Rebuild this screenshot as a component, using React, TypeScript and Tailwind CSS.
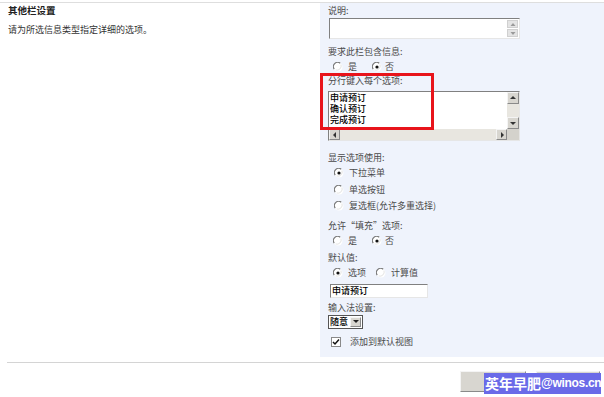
import React from "react";

const Radio = ({ checked }: { checked?: boolean }) => (
  <svg width="10" height="10" viewBox="0 0 10 10" className="shrink-0">
    <circle cx="5" cy="5" r="4.5" fill="#ffffff" />
    <path d="M1.2 7.2 A4.3 4.3 0 0 1 7.2 1.2" stroke="#7a7a7a" strokeWidth="1.2" fill="none" />
    <path d="M8 2.6 A4.3 4.3 0 0 1 2.6 8" stroke="#e4e4e4" strokeWidth="1" fill="none" />
    {checked && <circle cx="5" cy="5" r="1.6" fill="#111111" />}
  </svg>
);

const Label = ({ children, mt }: { children: React.ReactNode; mt: string }) => (
  <div className={`${mt} h-[11px] leading-[11px] text-[9px] text-[#4a4a4a] whitespace-nowrap`}>{children}</div>
);

const Sunken = "border border-t-[#808080] border-l-[#808080] border-b-[#e6e6e6] border-r-[#e6e6e6]";

const Arrow = ({ dir }: { dir: "up" | "down" | "left" | "right" }) => {
  const d =
    dir === "up" ? "M1 5 L4 2 L7 5 Z" : dir === "down" ? "M1 3 L4 6 L7 3 Z" : dir === "left" ? "M5 1 L2 4 L5 7 Z" : "M3 1 L6 4 L3 7 Z";
  return (
    <svg width="8" height="8" viewBox="0 0 8 8">
      <path d={d} fill="#333" />
    </svg>
  );
};

const SmallArrow = ({ dir }: { dir: "up" | "down" }) => (
  <svg width="6" height="5" viewBox="0 0 6 5">
    <path d={dir === "up" ? "M0.5 4 L3 1 L5.5 4 Z" : "M0.5 1 L3 4 L5.5 1 Z"} fill="#9a9a9a" />
  </svg>
);

const Btn3d = "bg-[#d8d6d0] border border-t-[#f4f4f4] border-l-[#f4f4f4] border-b-[#8a8a8a] border-r-[#8a8a8a] flex items-center justify-center";

export default function App() {
  return (
    <div
      className="relative w-[604px] h-[397px] bg-white overflow-hidden"
      style={{ fontFamily: '"Noto Sans CJK SC", "Liberation Sans", sans-serif' }}
    >
      <div className="mt-[2px] border-t border-[#dedede] flex h-[355px]">
        <div className="w-[320px] pl-[8px]">
          <div className="mt-[2px] h-[11px] leading-[11px] text-[9.5px] font-bold text-[#222]">其他栏设置</div>
          <div className="mt-[8px] h-[11px] leading-[11px] text-[9px] text-[#333]">请为所选信息类型指定详细的选项。</div>
        </div>
        <div className="flex-1 bg-[#eff3fc] pl-[8px] flex flex-col">
          <Label mt="mt-[2px]">说明:</Label>
          <div className={`mt-[2px] ml-[1px] w-[191px] h-[21px] bg-white ${Sunken} flex justify-end`}>
            <div className="w-[11px] flex flex-col gap-[1px] pt-[1px] mr-[1px]">
              <div className="h-[8px] bg-[#e4e4e4] border border-[#d0d0d0] flex items-center justify-center"><SmallArrow dir="up" /></div>
              <div className="h-[8px] bg-[#e4e4e4] border border-[#d0d0d0] flex items-center justify-center"><SmallArrow dir="down" /></div>
            </div>
          </div>
          <Label mt="mt-[7px]">要求此栏包含信息:</Label>
          <div className="mt-[4px] h-[11px] flex items-center text-[9px] text-[#4a4a4a] pl-[5px]">
            <Radio />
            <span className="ml-[5px]">是</span>
            <span className="ml-[15px]"><Radio checked /></span>
            <span className="ml-[3px]">否</span>
          </div>
          <Label mt="mt-[3px]">分行键入每个选项:</Label>
          <div className={`mt-[5px] w-[192px] h-[50px] bg-white ${Sunken} flex flex-col`}>
            <div className="flex flex-1 min-h-0">
              <div className="flex-1 pl-[1px] text-[9px] leading-[11px] text-black font-medium">
                <div className="h-[11px]">申请预订</div>
                <div className="h-[11px]">确认预订</div>
                <div className="h-[11px]">完成预订</div>
              </div>
              <div className="w-[12px] bg-[#e8e6e0] flex flex-col">
                <div className={`h-[12px] ${Btn3d}`}><Arrow dir="up" /></div>
                <div className="flex-1" />
                <div className={`h-[12px] ${Btn3d}`}><Arrow dir="down" /></div>
              </div>
            </div>
            <div className="h-[11px] flex bg-[#e8e6e0]">
              <div className={`w-[11px] ${Btn3d}`}><Arrow dir="left" /></div>
              <div className="flex-1" />
              <div className={`w-[11px] ${Btn3d}`}><Arrow dir="right" /></div>
              <div className="w-[12px] bg-[#d4d2cc]" />
            </div>
          </div>
          <Label mt="mt-[11px]">显示选项使用:</Label>
          <div className="mt-[4px] h-[11px] flex items-center text-[9px] text-[#4a4a4a] pl-[6px]">
            <Radio checked /><span className="ml-[5px]">下拉菜单</span>
          </div>
          <div className="mt-[6px] h-[11px] flex items-center text-[9px] text-[#4a4a4a] pl-[6px]">
            <Radio /><span className="ml-[5px]">单选按钮</span>
          </div>
          <div className="mt-[5px] h-[11px] flex items-center text-[9px] text-[#4a4a4a] pl-[6px]">
            <Radio /><span className="ml-[5px]">复选框(允许多重选择)</span>
          </div>
          <Label mt="mt-[9px]">允许“填充”选项:</Label>
          <div className="mt-[4px] h-[11px] flex items-center text-[9px] text-[#4a4a4a] pl-[5px]">
            <Radio />
            <span className="ml-[5px]">是</span>
            <span className="ml-[15px]"><Radio checked /></span>
            <span className="ml-[3px]">否</span>
          </div>
          <Label mt="mt-[6px]">默认值:</Label>
          <div className="mt-[4px] h-[11px] flex items-center text-[9px] text-[#4a4a4a] pl-[5px]">
            <Radio checked />
            <span className="ml-[5px]">选项</span>
            <span className="ml-[10px]"><Radio /></span>
            <span className="ml-[5px]">计算值</span>
          </div>
          <div className={`mt-[6px] ml-[2px] w-[98px] h-[14px] bg-white ${Sunken} text-[9px] leading-[12px] text-black pl-[1px] font-medium`}>
            申请预订
          </div>
          <Label mt="mt-[4px]">输入法设置:</Label>
          <div className="mt-[2px] w-[35px] h-[14px] bg-white border border-[#555] flex items-center">
            <span className="text-[9px] leading-[12px] text-black pl-[1px] font-medium">随意</span>
            <div className={`ml-auto mr-[1px] w-[11px] h-[10px] ${Btn3d}`}>
              <svg width="6" height="4" viewBox="0 0 6 4"><path d="M0 0 L6 0 L3 3 Z" fill="#222" /></svg>
            </div>
          </div>
          <div className="mt-[7px] h-[11px] flex items-center text-[9px] text-[#4a4a4a] pl-[3px]">
            <svg width="10" height="10" viewBox="0 0 10 10" className="shrink-0">
              <rect x="0.5" y="0.5" width="9" height="9" fill="#fff" stroke="#8a8a8a" />
              <path d="M2 5 L4 7 L8 2.5" stroke="#111" strokeWidth="1.5" fill="none" />
            </svg>
            <span className="ml-[9px]">添加到默认视图</span>
          </div>
        </div>
      </div>
      <div className="ml-[7px] mt-[5px] border-t border-[#d4d4d4]" />
      <div className="mt-[8px] flex justify-end pr-[4px] gap-[10px]">
        <div className={`w-[66px] h-[21px] text-[9px] text-[#333] ${Btn3d}`}>确定</div>
        <div className={`w-[64px] h-[21px] text-[9px] text-[#333] ${Btn3d}`}>取消</div>
      </div>
      <div className="absolute left-[320px] top-[73px] w-[114px] h-[57px] border-[3px] border-[#e8141b]" />
      <div className="absolute left-[484px] top-[373px] w-[117px] h-[21px] bg-[#6a6ae8] text-white leading-[21px] font-bold pl-[1px] whitespace-nowrap flex items-center">
        <span className="text-[14px]">英年早肥</span>
        <span className="text-[12px] tracking-[-0.3px]" style={{ fontFamily: '"Liberation Sans", sans-serif' }}>@winos.cn</span>
      </div>
    </div>
  );
}
